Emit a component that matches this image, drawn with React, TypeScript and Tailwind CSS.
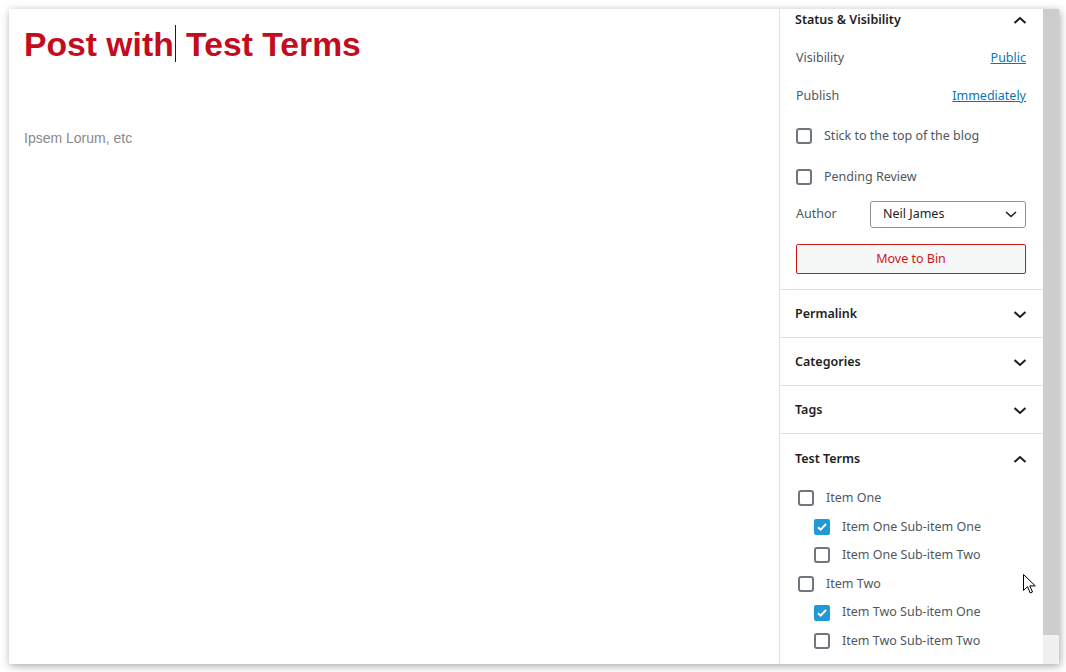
import type { ReactNode } from "react";

const sans = "font-['Noto_Sans',_'Open_Sans',_sans-serif]";

function ChevronUp() {
  return (
    <svg width="14" height="8" viewBox="0 0 14 8" className="mr-[5px]">
      <path d="M1.5 7L7 2l5.5 5" fill="none" stroke="#1e1e1e" strokeWidth="2" />
    </svg>
  );
}

function ChevronDown() {
  return (
    <svg width="14" height="8" viewBox="0 0 14 8" className="mr-[5px]">
      <path d="M1.5 1L7 6l5.5-5" fill="none" stroke="#1e1e1e" strokeWidth="2" />
    </svg>
  );
}

function Checkbox({ checked }: { checked?: boolean }) {
  if (checked) {
    return (
      <span className="flex h-4 w-4 shrink-0 items-center justify-center rounded-[2px] bg-[#1e9bd7]">
        <svg width="12" height="12" viewBox="0 0 12 12">
          <path d="M2 6.3l2.6 2.4L10 3" fill="none" stroke="#fff" strokeWidth="2" />
        </svg>
      </span>
    );
  }
  return <span className="block h-4 w-4 shrink-0 rounded-[3px] border-2 border-[#6f767e] bg-white" />;
}

function PanelHeader({ title, open, last }: { title: string; open?: boolean; last?: boolean }) {
  return (
    <div
      className={`flex h-[48px] items-center justify-between pl-[15px] pr-[11px] pt-[2px] ${last ? "" : "border-b border-[#e0e0e0]"}`}
    >
      <span className="text-[12.5px] font-semibold text-[#1e1e1e]">{title}</span>
      {open ? <ChevronUp /> : <ChevronDown />}
    </div>
  );
}

function Row({ children, className }: { children: ReactNode; className?: string }) {
  return <div className={`flex items-center ${className ?? ""}`}>{children}</div>;
}

function Term({ label, checked, sub }: { label: string; checked?: boolean; sub?: boolean }) {
  return (
    <Row className={`h-[28.6px] gap-3 ${sub ? "pl-[34px]" : "pl-[18px]"}`}>
      <Checkbox checked={checked} />
      <span className="text-[12.5px] text-[#50575e]">{label}</span>
    </Row>
  );
}

function Sidebar() {
  return (
    <div className={`w-[264px] shrink-0 overflow-hidden border-l border-[#e0e0e0] bg-white ${sans}`}>
      {/* status & visibility, scrolled a little */}
      <div className="border-b border-[#e0e0e0] pt-px">
        <div className="flex h-[20px] items-center justify-between pl-[15px] pr-[11px]">
          <span className="text-[12.5px] font-semibold text-[#1e1e1e]">Status &amp; Visibility</span>
          <ChevronUp />
        </div>
        <div className="flex flex-col pl-4 pr-[17px] text-[12.5px]">
          <Row className="mt-[9px] h-[38px] justify-between">
            <span className="text-[#50575e]">Visibility</span>
            <span className="text-[#0a75b5] underline">Public</span>
          </Row>
          <Row className="h-[38px] justify-between">
            <span className="text-[#50575e]">Publish</span>
            <span className="text-[#0a75b5] underline">Immediately</span>
          </Row>
          <Row className="h-[42px] gap-3">
            <Checkbox />
            <span className="text-[#50575e]">Stick to the top of the blog</span>
          </Row>
          <Row className="h-[40px] gap-3">
            <Checkbox />
            <span className="text-[#50575e]">Pending Review</span>
          </Row>
          <Row className="h-[34px] justify-between">
            <span className="text-[#50575e]">Author</span>
            <div className="flex h-[27px] w-[156px] items-center justify-between rounded-[3px] border border-[#8c8f94] pl-3 pr-[8px]">
              <span className="text-[#1e1e1e]">Neil James</span>
              <svg width="12" height="7" viewBox="0 0 12 7">
                <path d="M1 1l5 4.5L11 1" fill="none" stroke="#1e1e1e" strokeWidth="1.6" />
              </svg>
            </div>
          </Row>
          <div className="mb-[15px] mt-[13px] flex h-[30px] items-center justify-center rounded-[2px] border border-[#cc1818] bg-[#f6f7f7] text-[#cc1818]">
            Move to Bin
          </div>
        </div>
      </div>
      <PanelHeader title="Permalink" />
      <PanelHeader title="Categories" />
      <PanelHeader title="Tags" />
      <PanelHeader title="Test Terms" open last />
      <div className="pt-[2px]">
        <Term label="Item One" />
        <Term label="Item One Sub-item One" checked sub />
        <Term label="Item One Sub-item Two" sub />
        <Term label="Item Two" />
        <Term label="Item Two Sub-item One" checked sub />
        <Term label="Item Two Sub-item Two" sub />
      </div>
    </div>
  );
}

function Pointer() {
  return (
    <svg
      width="13"
      height="21"
      viewBox="0 0 13 21"
      className="pointer-events-none absolute left-[1014px] top-[565px]"
    >
      <path d="M0.5 0.5v16l4-3.8 2.7 6.3 2.3-1-2.7-6.1h5.5z" fill="#fff" stroke="#000" strokeWidth="1" strokeLinejoin="round" />
    </svg>
  );
}

export default function App() {
  return (
    <div className="h-[672px] w-[1066px] bg-white p-[9px]">
      <div className="relative flex h-[655px] w-[1050px] overflow-hidden bg-white shadow-[1px_2px_8px_rgba(0,0,0,0.35)]">
        <main className="flex-1 px-[15px] pt-[10px] font-['Liberation_Sans',_Arial,_sans-serif]">
          <h1 className="text-[33.7px] font-bold leading-[35px] text-[#c30c1e]">
            Post with
            <span className="mx-[1px] inline-block h-[37px] w-px translate-y-[6px] bg-[#1e1e1e] align-baseline" />
            {" "}Test Terms
          </h1>
          <p className="mt-[66px] text-[14px] text-[#8a8a8a]">Ipsem Lorum, etc</p>
        </main>
        <Sidebar />
        <div className="flex w-4 shrink-0 flex-col">
          <div className="h-[626px] bg-[#cdcdcd]" />
          <div className="flex-1 bg-[#f0f0f0]" />
        </div>
        <Pointer />
      </div>
    </div>
  );
}
